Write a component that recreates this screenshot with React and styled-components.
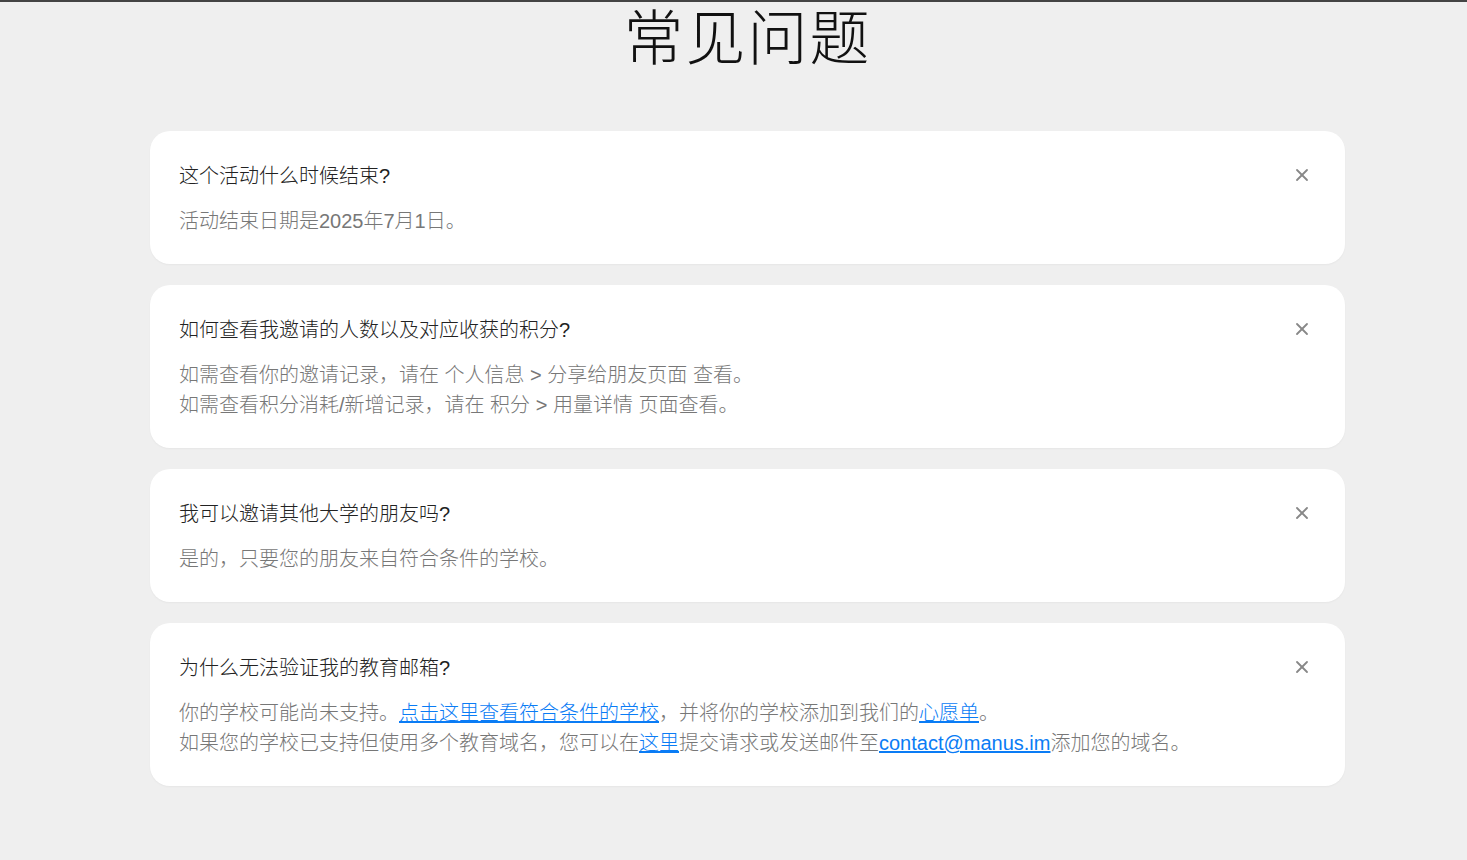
import React from 'react';
import styled, { createGlobalStyle } from 'styled-components';
import { X } from 'lucide-react';

const Global = createGlobalStyle`
  body {
    margin: 0;
    background: #efefef;
    border-top: 2px solid #444;
    font-family: "Liberation Sans", "Noto Sans CJK SC", sans-serif;
  }
`;

const Page = styled.div`
  padding: 0 0 60px 28px;
`;

const Title = styled.h1`
  margin: -4px 0 0;
  text-align: center;
  font-family: "Noto Sans CJK SC", serif;
  font-weight: 300;
  font-size: 60px;
  line-height: 72px;
  color: #111;
  letter-spacing: 2px;
`;

const List = styled.div`
  width: 1195px;
  margin: 61px auto 0;
  display: flex;
  flex-direction: column;
  gap: 21px;
`;

const Card = styled.div`
  position: relative;
  background: #fff;
  border-radius: 20px;
  padding: 30px 29px 28px;
  box-shadow: 0 1px 2px rgba(0, 0, 0, 0.04);
`;

const Question = styled.div`
  font-size: 20px;
  line-height: 30px;
  color: #222;
  font-weight: 300;
`;

const Answer = styled.div`
  margin-top: 15px;
  font-size: 20px;
  line-height: 30px;
  color: #777;
  font-weight: 300;
`;

const Link = styled.a`
  color: #0a7cf5;
  text-decoration: underline;
`;

const Close = styled.button`
  position: absolute;
  top: 34px;
  right: 33px;
  border: 0;
  background: none;
  padding: 0;
  color: #888;
  display: flex;
`;

const faqs = [
  { q: '这个活动什么时候结束?', a: <>活动结束日期是2025年7月1日。</> },
  {
    q: '如何查看我邀请的人数以及对应收获的积分?',
    a: (
      <>
        如需查看你的邀请记录，请在 个人信息 &gt; 分享给朋友页面 查看。<br />
        如需查看积分消耗/新增记录，请在 积分 &gt; 用量详情 页面查看。
      </>
    ),
  },
  { q: '我可以邀请其他大学的朋友吗?', a: <>是的，只要您的朋友来自符合条件的学校。</> },
  {
    q: '为什么无法验证我的教育邮箱?',
    a: (
      <>
        你的学校可能尚未支持。<Link href="#">点击这里查看符合条件的学校</Link>，并将你的学校添加到我们的
        <Link href="#">心愿单</Link>。<br />
        如果您的学校已支持但使用多个教育域名，您可以在<Link href="#">这里</Link>提交请求或发送邮件至
        <Link href="#">contact@manus.im</Link>添加您的域名。
      </>
    ),
  },
];

export default function App() {
  return (
    <Page>
      <Global />
      <Title>常见问题</Title>
      <List>
        {faqs.map((f, i) => (
          <Card key={i}>
            <Question>{f.q}</Question>
            <Answer>{f.a}</Answer>
            <Close aria-label="关闭">
              <X size={20} strokeWidth={2.2} />
            </Close>
          </Card>
        ))}
      </List>
    </Page>
  );
}
